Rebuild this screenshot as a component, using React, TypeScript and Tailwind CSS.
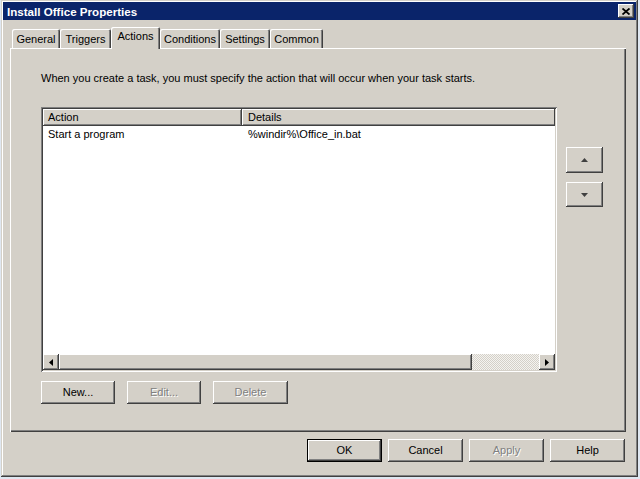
import type { ReactNode } from 'react'

const raised =
  'shadow-[inset_-1px_-1px_#404040,inset_1px_1px_#ffffff,inset_-2px_-2px_#808080,inset_2px_2px_#d4d0c8]'
const defRaised =
  'shadow-[inset_0_0_0_1px_#000000,inset_-2px_-2px_#404040,inset_2px_2px_#ffffff,inset_-3px_-3px_#808080]'
const sunken =
  'shadow-[inset_1px_1px_#808080,inset_-1px_-1px_#ffffff,inset_2px_2px_#404040,inset_-2px_-2px_#d4d0c8]'
const disabledText = 'text-[#808080] [text-shadow:1px_1px_0_#ffffff]'

function Button({ label, w, disabled, isDefault }: { label: string; w: string; disabled?: boolean; isDefault?: boolean }) {
  return (
    <div
      className={`${w} h-[23px] flex items-center justify-center bg-[#d4d0c8] ${isDefault ? defRaised : raised} ${
        disabled ? disabledText : 'text-black'
      }`}
    >
      {label}
    </div>
  )
}

function Tab({ label, w, active }: { label: string; w: string; active?: boolean }) {
  return active ? (
    <div
      className={`${w} h-[22px] self-start relative z-10 bg-[#d4d0c8] rounded-t-[2px] flex items-start justify-center pt-[3px] shadow-[inset_1px_1px_#ffffff,inset_-1px_0_#404040,inset_-2px_0_#808080]`}
    >
      {label}
    </div>
  ) : (
    <div
      className={`${w} h-[19px] self-end bg-[#d4d0c8] rounded-t-[2px] flex items-center justify-center pt-[1px] shadow-[inset_1px_1px_#ffffff,inset_-1px_0_#404040,inset_-2px_0_#808080]`}
    >
      {label}
    </div>
  )
}

function Arrow({ dir, color = '#000000' }: { dir: 'left' | 'right' | 'up' | 'down'; color?: string }) {
  const pts: Record<string, string> = {
    left: '4,0 4,7 0,3.5',
    right: '0,0 0,7 4,3.5',
    up: '0,4 7,4 3.5,0',
    down: '0,0 7,0 3.5,4',
  }
  const horiz = dir === 'left' || dir === 'right'
  return (
    <svg width={horiz ? 4 : 7} height={horiz ? 7 : 4} viewBox={horiz ? '0 0 4 7' : '0 0 7 4'}>
      <polygon points={pts[dir]} fill={color} />
    </svg>
  )
}

function ScrollBtn({ children }: { children: ReactNode }) {
  return <div className={`w-[16px] h-[16px] flex items-center justify-center bg-[#d4d0c8] ${raised}`}>{children}</div>
}

export default function App() {
  return (
    <div className="w-[640px] h-[479px] bg-[#dfe7f1] font-[Liberation_Sans,Arial,sans-serif] text-[11px] leading-[13px] text-black overflow-hidden">
      <div className="ml-[1px] w-[637px] h-[477px] bg-[#d4d0c8] flex flex-col p-[2px] shadow-[inset_-1px_-1px_#404040,inset_1px_1px_#d4d0c8,inset_-2px_-2px_#808080,inset_2px_2px_#ffffff]">
        {/* title bar */}
        <div className="h-[18px] bg-[#0a246a] flex items-center justify-between pl-[4px] pr-[2px]">
          <span className="text-white font-bold text-[11.6px]">Install Office Properties</span>
          <div className={`w-[16px] h-[14px] bg-[#d4d0c8] flex items-center justify-center ${raised}`}>
            <svg width="8" height="7" viewBox="0 0 8 7">
              <path d="M0.5 0.5 L7.5 6.5 M7.5 0.5 L0.5 6.5" stroke="#000" strokeWidth="1.8" />
            </svg>
          </div>
        </div>

        <div className="flex flex-col pl-[7px] pr-[10px]">
          {/* tabs */}
          <div className="mt-[7px] h-[21px] flex pl-[2px]">
            <Tab label="General" w="w-[48px]" />
            <Tab label="Triggers" w="w-[51px]" />
            <Tab label="Actions" w="w-[49px]" active />
            <Tab label="Conditions" w="w-[60px]" />
            <Tab label="Settings" w="w-[50px]" />
            <Tab label="Common" w="w-[53px]" />
          </div>

          {/* tab panel */}
          <div className="h-[384px] flex flex-col pl-[31px] pt-[24px] shadow-[inset_1px_1px_#ffffff,inset_-1px_-1px_#404040,inset_-2px_-2px_#808080]">
            <p>When you create a task, you must specify the action that will occur when your task starts.</p>

            <div className="mt-[22px] flex">
              <div className={`w-[516px] h-[265px] bg-white p-[2px] flex flex-col ${sunken}`}>
                <div className="h-[17px] flex shrink-0">
                  <div className="w-[199px] bg-[#d4d0c8] pl-[5px] flex items-center shadow-[inset_-1px_-1px_#404040,inset_1px_1px_#ffffff,inset_-2px_-2px_#808080]">
                    Action
                  </div>
                  <div className="flex-1 bg-[#d4d0c8] pl-[6px] flex items-center shadow-[inset_-1px_-1px_#404040,inset_1px_1px_#ffffff,inset_0_-2px_#808080]">
                    Details
                  </div>
                </div>
                <div className="flex-1 flex">
                  <div className="w-[199px] pl-[5px] pt-[2px]">Start a program</div>
                  <div className="pl-[6px] pt-[2px]">%windir%\Office_in.bat</div>
                </div>
                <div className="h-[16px] flex shrink-0">
                  <ScrollBtn>
                    <Arrow dir="left" />
                  </ScrollBtn>
                  <div className={`w-[413px] h-[16px] bg-[#d4d0c8] ${raised}`} />
                  <div className="flex-1 h-[16px] bg-[repeating-conic-gradient(#f4f3f0_0_25%,#d4d0c8_0_50%)] bg-[length:2px_2px]" />
                  <ScrollBtn>
                    <Arrow dir="right" />
                  </ScrollBtn>
                </div>
              </div>

              <div className="ml-[9px] mt-[40px] flex flex-col gap-[9px]">
                <div className={`w-[37px] h-[26px] bg-[#d4d0c8] flex items-center justify-center ${raised}`}>
                  <Arrow dir="up" color="#404040" />
                </div>
                <div className={`w-[37px] h-[25px] bg-[#d4d0c8] flex items-center justify-center ${raised}`}>
                  <Arrow dir="down" color="#404040" />
                </div>
              </div>
            </div>

            <div className="mt-[9px] flex gap-[12px]">
              <Button label="New..." w="w-[74px]" />
              <Button label="Edit..." w="w-[74px]" disabled />
              <Button label="Delete" w="w-[75px]" disabled />
            </div>
          </div>

          {/* dialog buttons */}
          <div className="mt-[7px] flex justify-end gap-[6px] pr-[1px]">
            <Button label="OK" w="w-[75px]" isDefault />
            <Button label="Cancel" w="w-[75px]" />
            <Button label="Apply" w="w-[75px]" disabled />
            <Button label="Help" w="w-[75px]" />
          </div>
        </div>
      </div>
    </div>
  )
}
